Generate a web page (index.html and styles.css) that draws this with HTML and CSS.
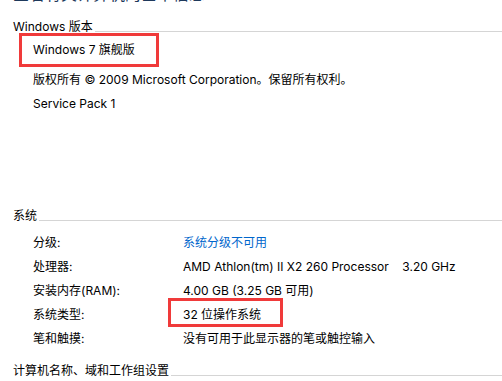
FILE: index.html
```html
<!DOCTYPE html>
<html lang="zh">
<head>
  <meta charset="UTF-8" />
  <title>系统</title>
  <link rel="stylesheet" href="styles.css">
</head>
<body>
  <div class="page">
    <div class="title">查看有关计算机的基本信息</div>

    <div class="group-head version-head"><span>Windows 版本</span></div>
    <div class="edition">Windows 7 旗舰版</div>
    <div class="line">版权所有 © 2009 Microsoft Corporation。保留所有权利。</div>
    <div class="line">Service Pack 1</div>

    <div class="group-head system-head"><span>系统</span></div>
    <div class="rows">
      <div class="row">
        <span class="label">分级:</span>
        <a class="value link" href="#">系统分级不可用</a>
      </div>
      <div class="row">
        <span class="label">处理器:</span>
        <span class="value pre">AMD Athlon(tm) II X2 260 Processor    3.20 GHz</span>
      </div>
      <div class="row">
        <span class="label">安装内存(RAM):</span>
        <span class="value">4.00 GB (3.25 GB 可用)</span>
      </div>
      <div class="row">
        <span class="label">系统类型:</span>
        <span class="value">32 位操作系统<span class="mark"></span></span>
      </div>
      <div class="row">
        <span class="label">笔和触摸:</span>
        <span class="value">没有可用于此显示器的笔或触控输入</span>
      </div>
    </div>

    <div class="group-head computer-head"><span>计算机名称、域和工作组设置</span></div>
  </div>
</body>
</html>
```

FILE: styles.css
```css
body {
  margin: 0;
  background: #fff;
  font-family: Inter, "Noto Sans CJK SC", sans-serif;
  font-size: 12px;
  color: #000;
  overflow: hidden;
}
.page {
  padding-left: 13px;
}
.title {
  font-size: 16px;
  line-height: 20px;
  height: 20px;
  margin-top: -16px;
  color: #1e395b;
}
.group-head {
  display: flex;
  align-items: center;
  height: 20px;
  line-height: 20px;
  gap: 2px;
}
.group-head::after {
  content: "";
  flex: 1;
  border-top: 1px solid #d5d5d5;
  margin-top: 8px;
}
.version-head {
  margin-top: 13px;
}
.edition {
  margin: -4px 0 0 6px;
  width: 140px;
  height: 34px;
  box-sizing: border-box;
  border: 3px solid #f03a3a;
  padding-left: 11px;
  line-height: 28px;
}
.line {
  margin-left: 20px;
  line-height: 24px;
}
.edition + .line {
  margin-top: 1px;
}
.system-head {
  margin-top: 90px;
}
.rows {
  margin-top: 5px;
}
.row {
  display: flex;
  line-height: 24px;
  height: 24px;
}
.label {
  width: 150px;
  padding-left: 20px;
  flex-shrink: 0;
}
.value {
  position: relative;
}
.pre {
  white-space: pre;
}
.link {
  color: #0066cc;
  text-decoration: none;
}
.mark {
  position: absolute;
  left: -15px;
  top: -5px;
  width: 115px;
  height: 29px;
  box-sizing: border-box;
  border: 3px solid #f03a3a;
}
.computer-head {
  margin-top: 10px;
}
```
